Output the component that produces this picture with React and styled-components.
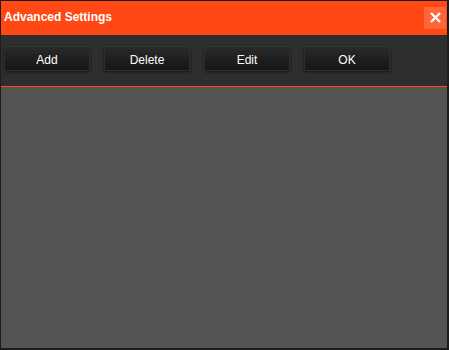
import styled, { createGlobalStyle } from 'styled-components'

const GlobalStyle = createGlobalStyle`
  html, body {
    margin: 0;
    padding: 0;
    background: #fff;
  }
  body {
    font-family: "Liberation Sans", Arial, sans-serif;
  }
`

const Window = styled.div`
  width: 449px;
  height: 350px;
  box-sizing: border-box;
  border-style: solid;
  border-color: #1c1c1c;
  border-width: 1px 2px 2px 1px;
  display: flex;
  flex-direction: column;
  background: #545454;
`

const TitleBar = styled.div`
  height: 34px;
  flex: none;
  display: flex;
  align-items: center;
  justify-content: space-between;
  padding: 0 1px 0 3px;
  background: #ff4813;
`

const Title = styled.span`
  color: #fff;
  font-weight: 700;
  font-size: 12px;
  margin-top: -3px;
`

const CloseButton = styled.button`
  width: 22px;
  height: 22px;
  margin-top: -1px;
  padding: 0;
  border: none;
  background: #ff6535;
  display: flex;
  align-items: center;
  justify-content: center;
  cursor: pointer;
`

const Toolbar = styled.div`
  height: 51px;
  flex: none;
  box-sizing: border-box;
  display: flex;
  align-items: flex-start;
  gap: 14px;
  padding: 11px 0 0 3px;
  background: #2e2e2e;
`

const Divider = styled.div`
  height: 1px;
  flex: none;
  background: #ff4a12;
`

const ToolButton = styled.button`
  width: 86px;
  height: 25px;
  padding: 3px 0 0;
  border: 1px solid #303030;
  border-top-color: #383838;
  border-radius: 2px;
  background: linear-gradient(#2a2a2a, #151515);
  box-shadow: 0 1px 3px rgba(0, 0, 0, 0.6);
  color: #fff;
  font-family: "Liberation Sans", Arial, sans-serif;
  font-size: 12px;
  cursor: pointer;
`

const Content = styled.div`
  flex: 1;
  background: #545454;
`

export default function App() {
  return (
    <>
      <GlobalStyle />
      <Window>
        <TitleBar>
          <Title>Advanced Settings</Title>
          <CloseButton aria-label="Close">
            <svg width="11" height="11" viewBox="0 0 11 11">
              <path d="M1 1 L10 10 M10 1 L1 10" stroke="#fff" strokeWidth="2.4" />
            </svg>
          </CloseButton>
        </TitleBar>
        <Toolbar>
          <ToolButton>Add</ToolButton>
          <ToolButton>Delete</ToolButton>
          <ToolButton>Edit</ToolButton>
          <ToolButton>OK</ToolButton>
        </Toolbar>
        <Divider />
        <Content />
      </Window>
    </>
  )
}
